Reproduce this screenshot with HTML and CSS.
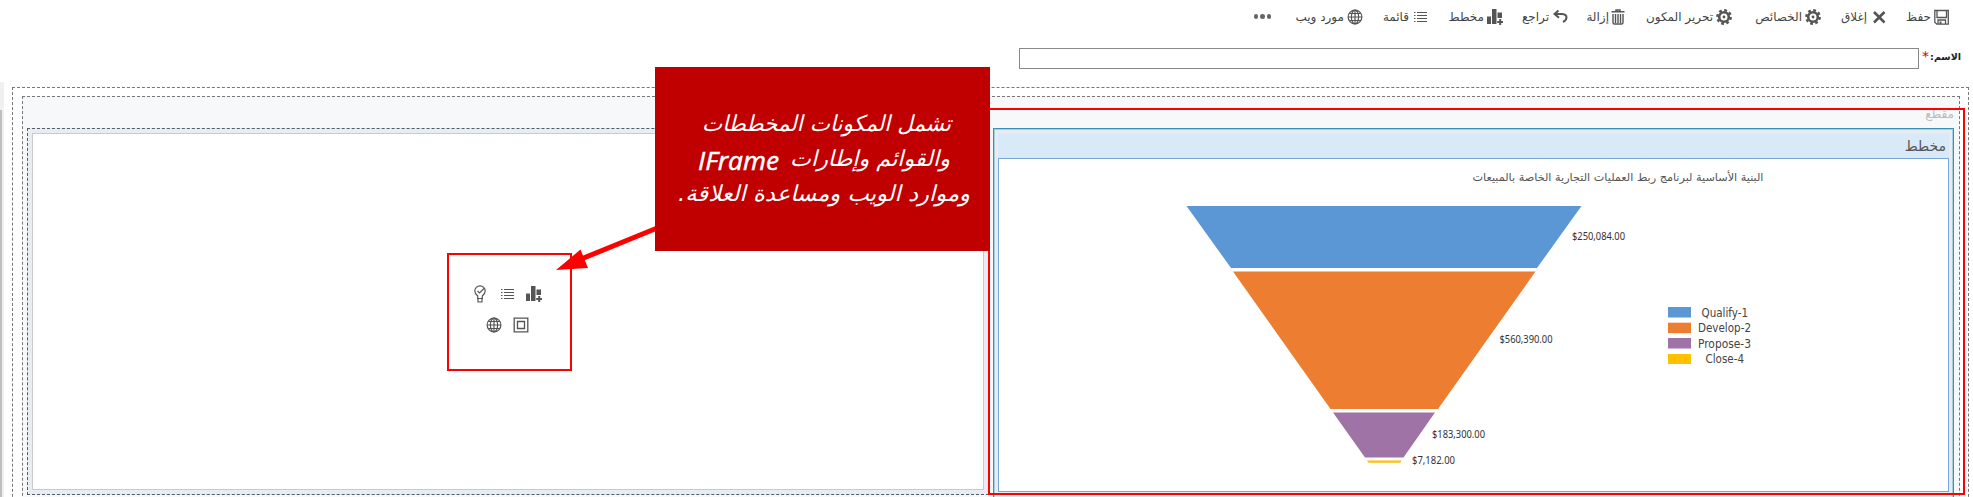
FILE: index.html
```html
<!DOCTYPE html>
<html lang="ar">
<head>
<meta charset="utf-8">
<title>مخطط</title>
<link rel="stylesheet" href="styles.css">
</head>
<body>
<svg width="0" height="0" class="defs">
  <symbol id="i-save" viewBox="0 0 16 16"><path d="M1.800 1.500h13.500v13.700H3.800l-2-2zM4 1.500v7h9.500v-7M5 15v-4h7.500v4" fill="none" stroke="currentColor" stroke-width="1.300"/><path d="M6.500 12.500h2V15h-2z" fill="currentColor"/></symbol>
  <symbol id="i-close" viewBox="0 0 16 16"><path d="M3 3l10.500 10.500M13.500 3L3 13.500" stroke="currentColor" stroke-width="2.600"/></symbol>
  <symbol id="i-gear" viewBox="0 0 16 16"><circle cx="8" cy="8" r="4.800" fill="none" stroke="currentColor" stroke-width="2.600"/><circle cx="8" cy="8" r="6.700" fill="none" stroke="currentColor" stroke-width="2.400" stroke-dasharray="2.800 2.462"/><circle cx="8" cy="8" r="1.400" fill="currentColor"/></symbol>
  <symbol id="i-trash" viewBox="0 0 16 16"><path d="M2.500 2.800h13M7 2.500V1h4v1.500M4 5v8.500q0 1.500 1.500 1.500h7q1.500 0 1.500-1.500V5M6.500 5v9M9 5v9M11.500 5v9" fill="none" stroke="currentColor" stroke-width="1.400"/></symbol>
  <symbol id="i-undo" viewBox="0 0 16 16"><path d="M6.500 1.500L2.500 5l4.500 3.800M2.500 5h7.500q4.500 .3 4.500 3.500 0 2.800-3.500 4.500" fill="none" stroke="currentColor" stroke-width="2"/></symbol>
  <symbol id="i-chart" viewBox="0 0 16 16"><path d="M0 7.500h4V15H0zM5 0h4.500v15H5zM10.500 3.500H15V9h-4.500zM12.200 10h2v2H16v2h-1.800v2h-2v-2h-2v-2h2z" fill="currentColor"/></symbol>
  <symbol id="i-list" viewBox="0 0 16 16"><path d="M2 3.500h1.500M5 3.500h10M2 6.500h1.500M5 6.500h10M2 9.500h1.500M5 9.500h10M2 12.500h1.500M5 12.500h10" stroke="currentColor" stroke-width="1"/></symbol>
  <symbol id="i-globe" viewBox="0 0 16 16"><g fill="none" stroke="currentColor" stroke-width="1.200"><circle cx="8" cy="8" r="6.900"/><ellipse cx="8" cy="8" rx="3.600" ry="6.900"/><path d="M8 1v14M1 8h14M2.200 4.500h11.600M2.200 11.500h11.600"/></g></symbol>
  <symbol id="i-bulb" viewBox="0 0 16 18"><g fill="none" stroke="currentColor" stroke-width="1.200"><path d="M5.700 13.500V11Q2.800 8.500 2.800 6a5.200 5.200 0 0 1 10.400 0q0 2.500-2.900 5v2.500z"/><path d="M6 13v4h4v-4M5.500 6l2 2 4.500-4.500"/></g></symbol>
  <symbol id="i-frame" viewBox="0 0 16 16"><path d="M1.200 1.200h13.600v13.600H1.200zM4.500 4.500h7v7h-7z" fill="none" stroke="currentColor" stroke-width="1.300"/></symbol>
</svg>

<header class="toolbar">
  <div class="tool t1"><svg><use href="#i-save"/></svg><span>حفظ</span></div>
  <div class="tool t2"><svg><use href="#i-close"/></svg><span>إغلاق</span></div>
  <div class="tool t3"><svg><use href="#i-gear"/></svg><span>الخصائص</span></div>
  <div class="tool t4"><svg><use href="#i-gear"/></svg><span>تحرير المكون</span></div>
  <div class="tool t5"><svg><use href="#i-trash"/></svg><span>إزالة</span></div>
  <div class="tool t6"><svg><use href="#i-undo"/></svg><span>تراجع</span></div>
  <div class="tool t7"><svg><use href="#i-chart"/></svg><span>مخطط</span></div>
  <div class="tool t8"><svg><use href="#i-list"/></svg><span>قائمة</span></div>
  <div class="tool t9"><svg><use href="#i-globe"/></svg><span>مورد ويب</span></div>
  <div class="more"><i></i><i></i><i></i></div>
</header>

<div class="name-row">
  <label class="name-label">الاسم:</label><span class="required">*</span>
  <input class="name-input" type="text">
</div>

<main class="workspace">
  <div class="scrollbar"><div class="thumb"></div></div>
  <div class="tab-frame">
    <section class="section-frame">
      <h2 class="section-title">مقطع</h2>
      <div class="columns">
        <div class="column">
          <div class="placeholder">
            <div class="icon-row"><svg><use href="#i-chart"/></svg><svg><use href="#i-list"/></svg><svg class="bulb"><use href="#i-bulb"/></svg></div>
            <div class="icon-row"><svg><use href="#i-frame"/></svg><svg><use href="#i-globe"/></svg></div>
          </div>
        </div>
        <div class="component">
          <h3 class="component-title">مخطط</h3>
          <div class="chart-panel">
            <svg class="chart" viewBox="999 159 949 332" width="949" height="332">
              <text class="chart-title" x="1472.500" y="180.500" textLength="291" lengthAdjust="spacingAndGlyphs">البنية الأساسية لبرنامج ربط العمليات التجارية الخاصة بالمبيعات</text>
              <path class="blue" d="M1186.500 206h395L1537 268H1231z"/>
              <path class="orange" d="M1233 271.500h302.500L1438 409h-107.500z"/>
              <path class="purple" d="M1333 412.500h102L1403.500 457.500h-38.500z"/>
              <path class="yellow" d="M1367 460.500h34.500l-1 2.300h-32z"/>
              <g class="value">
                <text x="1572" y="240" textLength="53" lengthAdjust="spacingAndGlyphs">$250,084.00</text>
                <text x="1499.500" y="342.500" textLength="53" lengthAdjust="spacingAndGlyphs">$560,390.00</text>
                <text x="1432" y="438" textLength="53" lengthAdjust="spacingAndGlyphs">$183,300.00</text>
                <text x="1412" y="464" textLength="43" lengthAdjust="spacingAndGlyphs">$7,182.00</text>
              </g>
              <rect class="blue" x="1668" y="307" width="23" height="10.500"/>
              <rect class="orange" x="1668" y="322.700" width="23" height="10.500"/>
              <rect class="purple" x="1668" y="338" width="23" height="10.500"/>
              <rect class="yellow" x="1668" y="354" width="23" height="10"/>
              <g class="legend">
                <text x="1701.500" y="316.500" textLength="46.500" lengthAdjust="spacingAndGlyphs">Qualify-1</text>
                <text x="1698" y="332" textLength="53" lengthAdjust="spacingAndGlyphs">Develop-2</text>
                <text x="1698" y="347.500" textLength="53" lengthAdjust="spacingAndGlyphs">Propose-3</text>
                <text x="1705.500" y="363" textLength="38.500" lengthAdjust="spacingAndGlyphs">Close-4</text>
              </g>
            </svg>
          </div>
        </div>
      </div>
    </section>
  </div>
</main>

<div class="highlight-chart"></div>
<div class="highlight-icons"></div>
<svg class="arrow" viewBox="550 220 110 60"><path d="M656 228.500L580 259.500" stroke="#f00" stroke-width="5"/><path d="M556 270l24.500-20.500 7.500 18.500z" fill="#f00"/></svg>
<div class="callout">
  <svg viewBox="655 67 335 184" width="335" height="184">
    <text x="702" y="131" textLength="249" lengthAdjust="spacingAndGlyphs">تشمل المكونات المخططات</text>
    <text x="790" y="166" textLength="160" lengthAdjust="spacingAndGlyphs">والقوائم وإطارات</text>
    <text class="latin" x="698" y="169.500" textLength="81" lengthAdjust="spacingAndGlyphs">IFrame</text>
    <text class="rtl" x="970" y="201" textLength="292" lengthAdjust="spacingAndGlyphs">وموارد الويب ومساعدة العلاقة.</text>
  </svg>
</div>
</body>
</html>
```

FILE: styles.css
```css
* { box-sizing: border-box; }
body {
  margin: 0;
  width: 1973px;
  height: 497px;
  overflow: hidden;
  position: relative;
  background: #fff;
  color: #444;
  font-family: "DejaVu Sans", "Noto Sans", sans-serif;
}
.defs { position: absolute; }
.toolbar {
  direction: rtl;
  display: flex;
  height: 47px;
  padding: 8px 24px 0 0;
  font-size: 12px;
}
.tool { display: flex; align-items: center; gap: 3px; height: 17px; white-space: nowrap; }
.tool svg { width: 16px; height: 16px; flex: none; color: #555; }
.t1 { width: 62px; gap: 2px; }
.t2 { width: 66px; gap: 4px; }
.t3 { width: 89px; }
.t4 { width: 107px; }
.t5 { width: 57px; gap: 0; }
.t6 { width: 65px; }
.t7 { width: 75px; }
.t8 { width: 65px; }
.t9 { width: 92px; }
.more { display: flex; gap: 2px; align-items: center; height: 17px; }
.more i { width: 4.5px; height: 4.5px; border-radius: 50%; background: #666; }

.name-row { direction: rtl; display: flex; height: 35px; padding-right: 12px; }
.name-label { width: 30px; padding-top: 3px; font-size: 9.5px; font-weight: bold; line-height: 14px; color: #222; white-space: nowrap; }
.required { width: 12px; padding-right: 2px; color: #c00; font-size: 14px; line-height: 19px; }
.name-input { width: 900px; height: 21px; margin-top: 1px; border: 1px solid #888; border-radius: 0; padding: 0; background: #fff; }

.workspace { display: flex; height: 415px; overflow: hidden; }
.scrollbar { width: 4px; height: 415px; padding-top: 28px; background: #f0f0f0; }
.thumb { width: 2px; height: 387px; background: #bfbfbf; }
.tab-frame {
  width: 1957px;
  height: 440px;
  margin: 5px 0 0 8px;
  padding: 8px 8px 0 9px;
  border: 1px dashed #777;
  flex: none;
}
.section-frame { width: 1938px; height: 430px; border: 1px dashed #777; background: #f6f8fa; padding-left: 4px; }
.section-title { direction: rtl; margin: 0; height: 31px; padding: 10px 5px 0 0; font-size: 12px; line-height: 14px; font-weight: normal; color: #bbb; }
.columns { display: flex; gap: 4px; }
.column { width: 962px; height: 367px; padding: 4px; border: 1px dashed #555c64; background: #e8edf1; }
.placeholder {
  height: 357px;
  border: 1px solid #c8cbce;
  background: #fff;
  display: flex;
  flex-direction: column;
  align-items: center;
  padding: 151px 2px 0 0;
  gap: 13px;
}
.icon-row { direction: rtl; display: flex; gap: 11px; color: #555; height: 18px; align-items: center; }
.icon-row svg { width: 16px; height: 16px; }
.icon-row .bulb { height: 18px; }
.component { width: 961px; height: 370px; padding: 4px; border: 1px solid #3a93b5; border-bottom: 0; background: #e8ecf2; box-shadow: inset 0 0 0 1px #a5cfdd; }
.component-title { direction: rtl; margin: 0; height: 25px; padding: 3px 3px 0 0; background: #d8eaf8; font-size: 14px; line-height: 20px; font-weight: normal; color: #555; }
.chart-panel { height: 334px; border: 1px solid #78a5da; background: #fff; overflow: hidden; }
.chart { display: block; }
.chart-title { font-size: 11px; fill: #555; }
.blue { fill: #5b97d5; }
.orange { fill: #ed7d31; }
.purple { fill: #a073a7; }
.yellow { fill: #ffc000; }
.value { font: 10px "Noto Sans", sans-serif; fill: #333; }
.legend { font: 11.5px "DejaVu Sans Condensed", "DejaVu Sans", sans-serif; fill: #444; }

.highlight-chart { position: absolute; left: 988px; top: 108px; width: 977px; height: 387px; border: 2px solid #f00; }
.highlight-icons { position: absolute; left: 447px; top: 253px; width: 125px; height: 118px; border: 2px solid #f00; }
.arrow { position: absolute; left: 550px; top: 220px; width: 110px; height: 60px; }
.callout { position: absolute; left: 655px; top: 67px; width: 335px; height: 184px; background: #c00000; }
.callout svg { display: block; }
.callout text { font-family: "DejaVu Sans", sans-serif; font-size: 22px; font-style: italic; fill: #fff; }
.callout .rtl { direction: rtl; }
.callout .latin { font-family: "Open Sans", sans-serif; font-size: 25px; font-weight: 500; stroke: #fff; stroke-width: 0.5px; }
```
